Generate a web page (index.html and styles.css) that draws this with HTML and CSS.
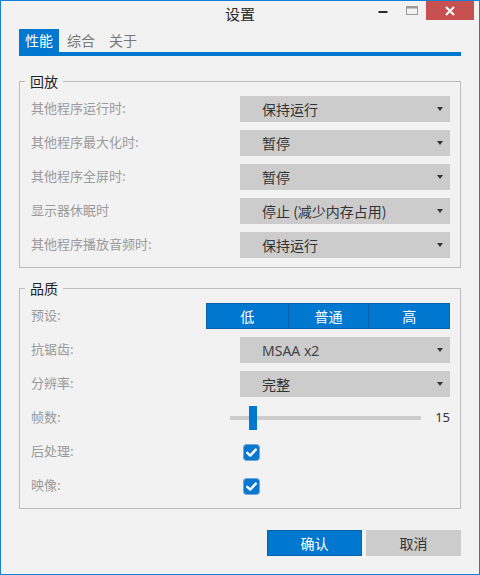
FILE: index.html
```html
<!DOCTYPE html>
<html lang="zh">
<head>
<meta charset="utf-8">
<title>设置</title>
<link rel="stylesheet" href="styles.css">
</head>
<body>
<div class="window">
  <div class="titlebar">
    <div class="spacer"></div>
    <div class="title">设置</div>
    <div class="controls">
      <span class="ctl"><svg width="10" height="10" viewBox="0 0 10 10"><rect x="0.5" y="5" width="9" height="2" fill="#2a2a2a"/></svg></span>
      <span class="ctl"><svg width="12" height="9" viewBox="0 0 12 9"><rect x="0.5" y="0.5" width="11" height="8" fill="none" stroke="#9a9a9a"/><rect x="1" y="1" width="10" height="1.5" fill="#9a9a9a"/></svg></span>
      <span class="ctl close"><svg width="10" height="10" viewBox="0 0 10 10"><path d="M1 1 L9 9 M9 1 L1 9" stroke="#fff" stroke-width="2"/></svg></span>
    </div>
  </div>
  <div class="content">
    <div class="tabs">
      <span class="tab active">性能</span>
      <span class="tab">综合</span>
      <span class="tab">关于</span>
    </div>

    <fieldset class="group g-first">
      <legend>回放</legend>
      <div class="rows">
        <div class="row"><span class="label">其他程序运行时:</span><div class="select"><span>保持运行</span><i class="arrow"></i></div></div>
        <div class="row"><span class="label">其他程序最大化时:</span><div class="select"><span>暂停</span><i class="arrow"></i></div></div>
        <div class="row"><span class="label">其他程序全屏时:</span><div class="select"><span>暂停</span><i class="arrow"></i></div></div>
        <div class="row"><span class="label">显示器休眠时</span><div class="select"><span>停止 (减少内存占用)</span><i class="arrow"></i></div></div>
        <div class="row"><span class="label">其他程序播放音频时:</span><div class="select"><span>保持运行</span><i class="arrow"></i></div></div>
      </div>
    </fieldset>

    <fieldset class="group g-second">
      <legend>品质</legend>
      <div class="rows">
        <div class="row"><span class="label">预设:</span>
          <div class="segmented"><span class="seg">低</span><span class="seg">普通</span><span class="seg">高</span></div>
        </div>
        <div class="row"><span class="label">抗锯齿:</span><div class="select"><span class="latin">MSAA x2</span><i class="arrow"></i></div></div>
        <div class="row"><span class="label">分辨率:</span><div class="select"><span>完整</span><i class="arrow"></i></div></div>
        <div class="row"><span class="label">帧数:</span>
          <div class="slider">
            <div class="track"><span class="thumb"></span></div>
            <span class="value">15</span>
          </div>
        </div>
        <div class="row"><span class="label">后处理:</span>
          <div class="check-wrap"><svg class="check" width="17" height="17" viewBox="0 0 17 17"><rect x="0.5" y="0.5" width="16" height="16" rx="3" fill="#0a78cf" stroke="#6fa8d8"/><path d="M4.3 8.8 L7.2 11.6 L12.8 5.6" fill="none" stroke="#fff" stroke-width="2.4" stroke-linecap="round" stroke-linejoin="round"/></svg></div>
        </div>
        <div class="row"><span class="label">映像:</span>
          <div class="check-wrap"><svg class="check" width="17" height="17" viewBox="0 0 17 17"><rect x="0.5" y="0.5" width="16" height="16" rx="3" fill="#0a78cf" stroke="#6fa8d8"/><path d="M4.3 8.8 L7.2 11.6 L12.8 5.6" fill="none" stroke="#fff" stroke-width="2.4" stroke-linecap="round" stroke-linejoin="round"/></svg></div>
        </div>
      </div>
    </fieldset>

    <div class="buttons">
      <button class="btn primary">确认</button>
      <button class="btn">取消</button>
    </div>
  </div>
</div>
</body>
</html>
```
FILE: styles.css
```css
* { box-sizing: border-box; }
html, body { margin: 0; padding: 0; background: #f2f2f2; }
body {
  font-family: "Noto Sans CJK SC", "Noto Sans", sans-serif;
}
.window {
  width: 480px;
  height: 575px;
  border: 1px solid #1780d6;
  background: #f2f2f2;
  display: flex;
  flex-direction: column;
}
.titlebar {
  height: 28px;
  display: grid;
  grid-template-columns: 1fr auto 1fr;
  align-items: start;
}
.title {
  font-size: 15px;
  line-height: 25px;
  color: #2b2b2b;
}
.controls {
  justify-self: end;
  display: flex;
  margin-right: 5px;
}
.ctl {
  width: 29px;
  height: 19px;
  display: flex;
  align-items: center;
  justify-content: center;
}
.ctl:first-child { width: 28px; }
.close {
  width: 48px;
  background: #c75050;
}
.content {
  padding: 0 18px;
  display: flex;
  flex-direction: column;
}
.tabs {
  display: flex;
  gap: 2px;
  border-bottom: 4px solid #0078d0;
  margin-bottom: 16px;
}
.tab {
  height: 23px;
  line-height: 23px;
  padding: 0 6px;
  font-size: 14px;
  color: #777;
}
.tab.active {
  background: #0078d0;
  color: #fff;
}
.group {
  margin: 0;
  padding: 0;
  border: 1px solid #bcbcbc;
  min-width: 0;
}
.g-second { margin-top: 11px; }
.group legend {
  margin-left: 5px;
  padding: 0 5px;
  font-size: 14px;
  line-height: 18px;
  height: 18px;
  color: #222;
}
.rows {
  padding: 6px 10px 9px 11px;
  display: flex;
  flex-direction: column;
  gap: 8px;
}
.row {
  height: 26px;
  display: flex;
  align-items: center;
}
.label {
  flex: 1;
  font-size: 13px;
  line-height: 18px;
  color: #9a9a9a;
  margin-top: -2px;
}
.select {
  width: 210px;
  height: 26px;
  background: #cccccc;
  position: relative;
  padding-left: 22px;
  font-size: 14px;
  line-height: 26px;
  color: #333;
}
.select .latin {
  font-family: "Noto Sans", "Noto Sans CJK SC", sans-serif;
  color: #444;
}
.arrow {
  position: absolute;
  right: 7px;
  top: 11px;
  width: 0;
  height: 0;
  border-style: solid;
  border-width: 4px 3.5px 0 3.5px;
  border-color: #333 transparent transparent transparent;
}
.segmented {
  width: 244px;
  height: 26px;
  display: grid;
  grid-template-columns: 1fr 1fr 1fr;
  background: #0078d0;
  border: 1px solid #0a63aa;
}
.seg {
  text-align: center;
  color: #fff;
  font-size: 14px;
  line-height: 24px;
}
.seg + .seg { border-left: 1px solid #0a63aa; }
.slider {
  width: 220px;
  height: 26px;
  display: flex;
  align-items: center;
  justify-content: space-between;
}
.track {
  width: 191px;
  height: 4px;
  background: #cccccc;
  position: relative;
}
.thumb {
  position: absolute;
  left: 19px;
  top: -10px;
  width: 8px;
  height: 24px;
  background: #0078d0;
}
.value {
  font-family: "Noto Sans", sans-serif;
  font-size: 13px;
  line-height: 16px;
  color: #333;
  margin-top: -3px;
}
.check-wrap {
  width: 210px;
  display: flex;
  align-items: center;
}
.check {
  display: block;
  margin-left: 3px;
}
.buttons {
  margin-top: 21px;
  display: flex;
  justify-content: flex-end;
  gap: 4px;
}
.btn {
  width: 95px;
  height: 26px;
  padding: 0;
  border: 1px solid #cccccc;
  background: #cccccc;
  color: #333;
  font-family: "Noto Sans CJK SC", sans-serif;
  font-size: 14px;
  line-height: 24px;
}
.btn.primary {
  background: #0078d0;
  border-color: #0a63aa;
  color: #fff;
}
```
